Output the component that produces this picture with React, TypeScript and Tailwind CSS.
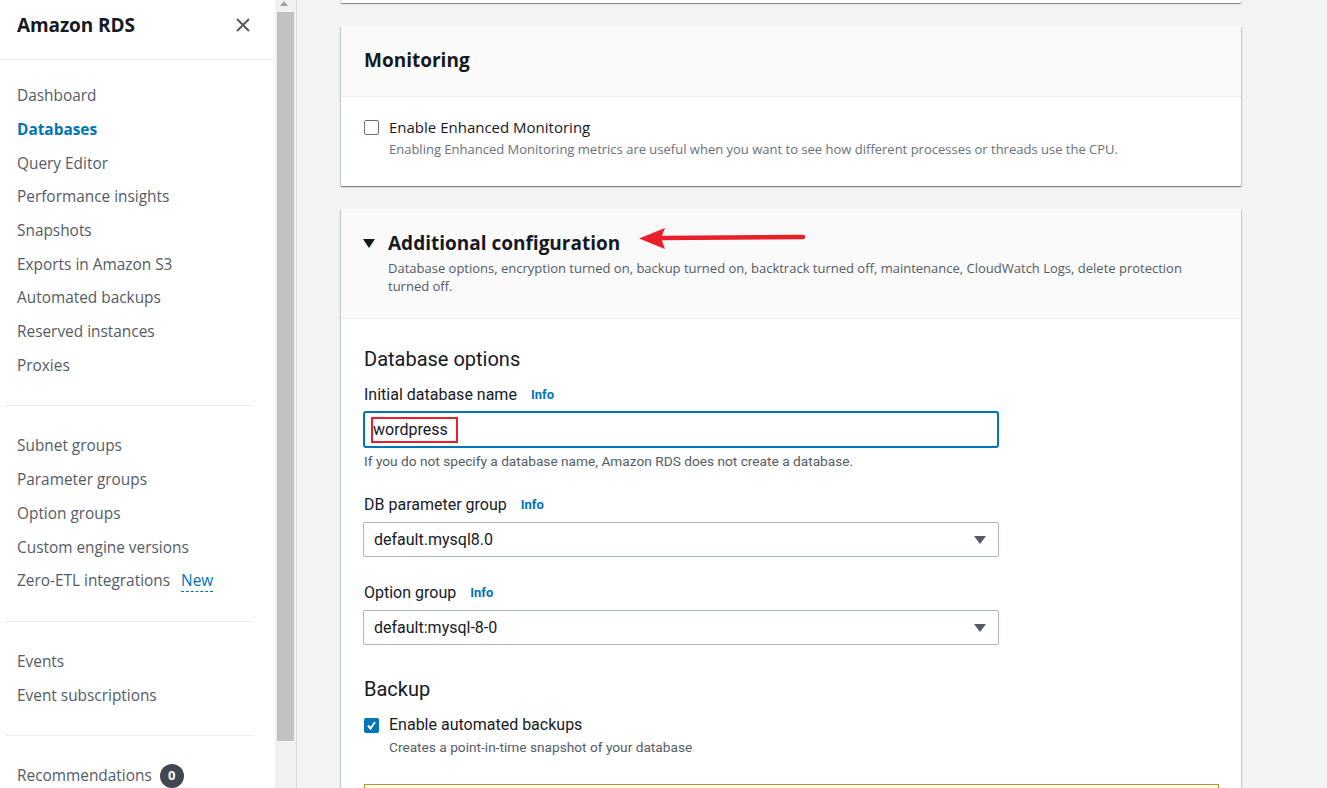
import React from "react";

const navGroups = [
  ["Dashboard", "Databases", "Query Editor", "Performance insights", "Snapshots", "Exports in Amazon S3", "Automated backups", "Reserved instances", "Proxies"],
  ["Subnet groups", "Parameter groups", "Option groups", "Custom engine versions", "Zero-ETL integrations"],
  ["Events", "Event subscriptions"],
];

const cardShadow =
  "shadow-[0_1px_1px_0_rgba(0,28,36,0.3),1px_1px_1px_0_rgba(0,28,36,0.15),-1px_1px_1px_0_rgba(0,28,36,0.15)]";

function Sidebar() {
  return (
    <aside className="w-[275px] shrink-0 bg-white font-['Open_Sans',sans-serif] text-[15.4px] text-[#545b64]">
      <div className="h-[60px] flex items-center justify-between pl-[17px] pr-[24px] pb-[9px] border-b border-[#eaeded]">
        <span className="text-[19px] font-bold text-[#16191f] tracking-[-0.1px]">Amazon RDS</span>
        <svg width="16" height="16" viewBox="0 0 16 16" className="text-[#545b64]">
          <path d="M2 2 L14 14 M14 2 L2 14" stroke="currentColor" strokeWidth="2" fill="none" />
        </svg>
      </div>
      <div className="pt-[19px]">
        {navGroups.map((g, gi) => (
          <div key={gi}>
            {gi > 0 && <div className="mx-[5px] w-[248px] h-px bg-[#eaeded] mt-[23px] mb-[23px]" />}
            {g.map((item) => (
              <div key={item} className="h-[33.7px] flex items-center pl-[17px]">
                <span className={item === "Databases" ? "font-bold text-[#0073bb]" : ""}>{item}</span>
                {item === "Zero-ETL integrations" && (
                  <span className="ml-[11px] text-[#0073bb] border-b border-dashed border-[#0073bb] leading-[20px] mt-[2px]">New</span>
                )}
              </div>
            ))}
          </div>
        ))}
        <div className="mx-[5px] w-[248px] h-px bg-[#eaeded] mt-[23px] mb-[23px]" />
        <div className="h-[33.7px] flex items-center pl-[17px]">
          <span>Recommendations</span>
          <span className="ml-[8px] w-[24px] h-[24px] rounded-full bg-[#414750] text-white text-[13px] font-bold flex items-center justify-center">0</span>
        </div>
      </div>
    </aside>
  );
}

function Scrollbar() {
  return (
    <div className="w-[22px] shrink-0 bg-[#f1f1f1] border-r border-[#d5dbdb] relative">
      <div className="absolute left-[5px] top-[1px] w-0 h-0 border-l-[4px] border-r-[4px] border-b-[5px] border-l-transparent border-r-transparent border-b-[#a3a3a3]" />
      <div className="absolute left-[2px] top-[12px] w-[17px] h-[729px] bg-[#c1c1c1]" />
    </div>
  );
}

function Checkbox({ checked }: { checked?: boolean }) {
  if (checked)
    return (
      <span className="w-[15px] h-[15px] rounded-[2px] bg-[#0073bb] flex items-center justify-center shrink-0">
        <svg width="11" height="11" viewBox="0 0 11 11">
          <path d="M2 5.5 L4.5 8.5 L9 2" stroke="white" strokeWidth="2" fill="none" />
        </svg>
      </span>
    );
  return <span className="w-[15px] h-[15px] rounded-[2px] border border-[#687078] bg-white shrink-0" />;
}

function Label({ text }: { text: string }) {
  return (
    <div className="flex items-center h-[20px] text-[16px] text-[#16191f]">
      {text}
      <span className="ml-[14px] text-[13px] font-bold text-[#0073bb]">Info</span>
    </div>
  );
}

function Select({ value, className }: { value: string; className: string }) {
  return (
    <div className={`w-[636px] h-[35px] border border-[#aab7b8] rounded-[2px] bg-white flex items-center justify-between pl-[10px] pr-[12px] text-[16px] text-[#16191f] ${className}`}>
      <span>{value}</span>
      <svg width="12" height="8" viewBox="0 0 12 8">
        <path d="M0 0 H12 L6 8 Z" fill="#545b64" />
      </svg>
    </div>
  );
}

function Main() {
  return (
    <main className="flex-1 bg-[#f2f3f3] pl-[44px] font-['Open_Sans',sans-serif]">
      <div className={`w-[900px] h-[3px] bg-white ${cardShadow}`} />

      <section className={`w-[900px] mt-[23px] bg-white ${cardShadow}`}>
        <div className="h-[71px] bg-[#fafafa] border-b border-[#eaeded] flex items-center px-[23px] pb-[1px]">
          <h2 className="text-[19px] font-bold text-[#16191f]">Monitoring</h2>
        </div>
        <div className="px-[23px] pt-[20px] h-[89px]">
          <div className="flex items-center gap-[10px] h-[20px] text-[15px] text-[#16191f]">
            <Checkbox />
            Enable Enhanced Monitoring
          </div>
          <p className="mt-[4px] ml-[25px] text-[13px] leading-[16px] text-[#687078]">
            Enabling Enhanced Monitoring metrics are useful when you want to see how different processes or threads use the CPU.
          </p>
        </div>
      </section>

      <section className={`w-[900px] mt-[23px] bg-white h-[600px] ${cardShadow}`}>
        <div className="bg-[#fafafa] border-b border-[#eaeded] pt-[22px] pb-[23px] pl-[22px] pr-[23px] relative">
          <div className="flex items-center h-[24px]">
            <svg width="12" height="10" viewBox="0 0 12 10" className="mr-[13px]">
              <path d="M0 1 H12 L6 10 Z" fill="#16191f" />
            </svg>
            <h2 className="text-[19px] font-bold text-[#16191f]">Additional configuration</h2>
          </div>
          <p className="mt-[4px] ml-[25px] text-[13px] leading-[18px] text-[#545b64] pr-[25px]">
            Database options, encryption turned on, backup turned on, backtrack turned off, maintenance, CloudWatch Logs, delete protection turned off.
          </p>
          <svg width="170" height="26" viewBox="0 0 170 26" className="absolute left-[298px] top-[16px]">
            <path d="M22 13 L164 12" stroke="#e8202a" strokeWidth="4.5" strokeLinecap="round" />
            <path d="M0 13.5 L26 3 L22 13 L26 24 Z" fill="#e8202a" />
          </svg>
        </div>

        <div className="px-[23px] pt-[28px] font-['Roboto',sans-serif]">
          <h3 className="text-[20px] leading-[24px] text-[#16191f]">Database options</h3>
          <div className="mt-[14px]">
            <Label text="Initial database name" />
          </div>
          <div className="mt-[6px] -ml-[1px] w-[636px] h-[37px] border-2 border-[#0073bb] rounded-[3px] bg-white flex items-center pl-[6px]">
            <span className="border-2 border-[#e8202a] h-[26px] w-[87px] flex items-center text-[16px] text-[#16191f]">wordpress</span>
          </div>
          <p className="mt-[5px] text-[13.7px] leading-[16px] text-[#545b64]">
            If you do not specify a database name, Amazon RDS does not create a database.
          </p>
          <div className="mt-[26px]">
            <Label text="DB parameter group" />
          </div>
          <Select value="default.mysql8.0" className="mt-[7px] -ml-[1px]" />
          <div className="mt-[26px]">
            <Label text="Option group" />
          </div>
          <Select value="default:mysql-8-0" className="mt-[7px] -ml-[1px]" />
          <h3 className="mt-[32px] text-[20px] leading-[24px] text-[#16191f]">Backup</h3>
          <div className="mt-[14px] flex items-center gap-[10px] h-[20px] text-[16px] text-[#16191f]">
            <Checkbox checked />
            Enable automated backups
          </div>
          <p className="mt-[4px] ml-[25px] text-[13.7px] leading-[16px] text-[#545b64]">
            Creates a point-in-time snapshot of your database
          </p>
          <div className="mt-[29px] w-[855px] h-[60px] border border-[#b7942f] bg-[#fffce9]" />
        </div>
      </section>
    </main>
  );
}

export default function App() {
  return (
    <div className="flex h-[788px] w-[1327px] overflow-hidden">
      <Sidebar />
      <Scrollbar />
      <Main />
    </div>
  );
}
